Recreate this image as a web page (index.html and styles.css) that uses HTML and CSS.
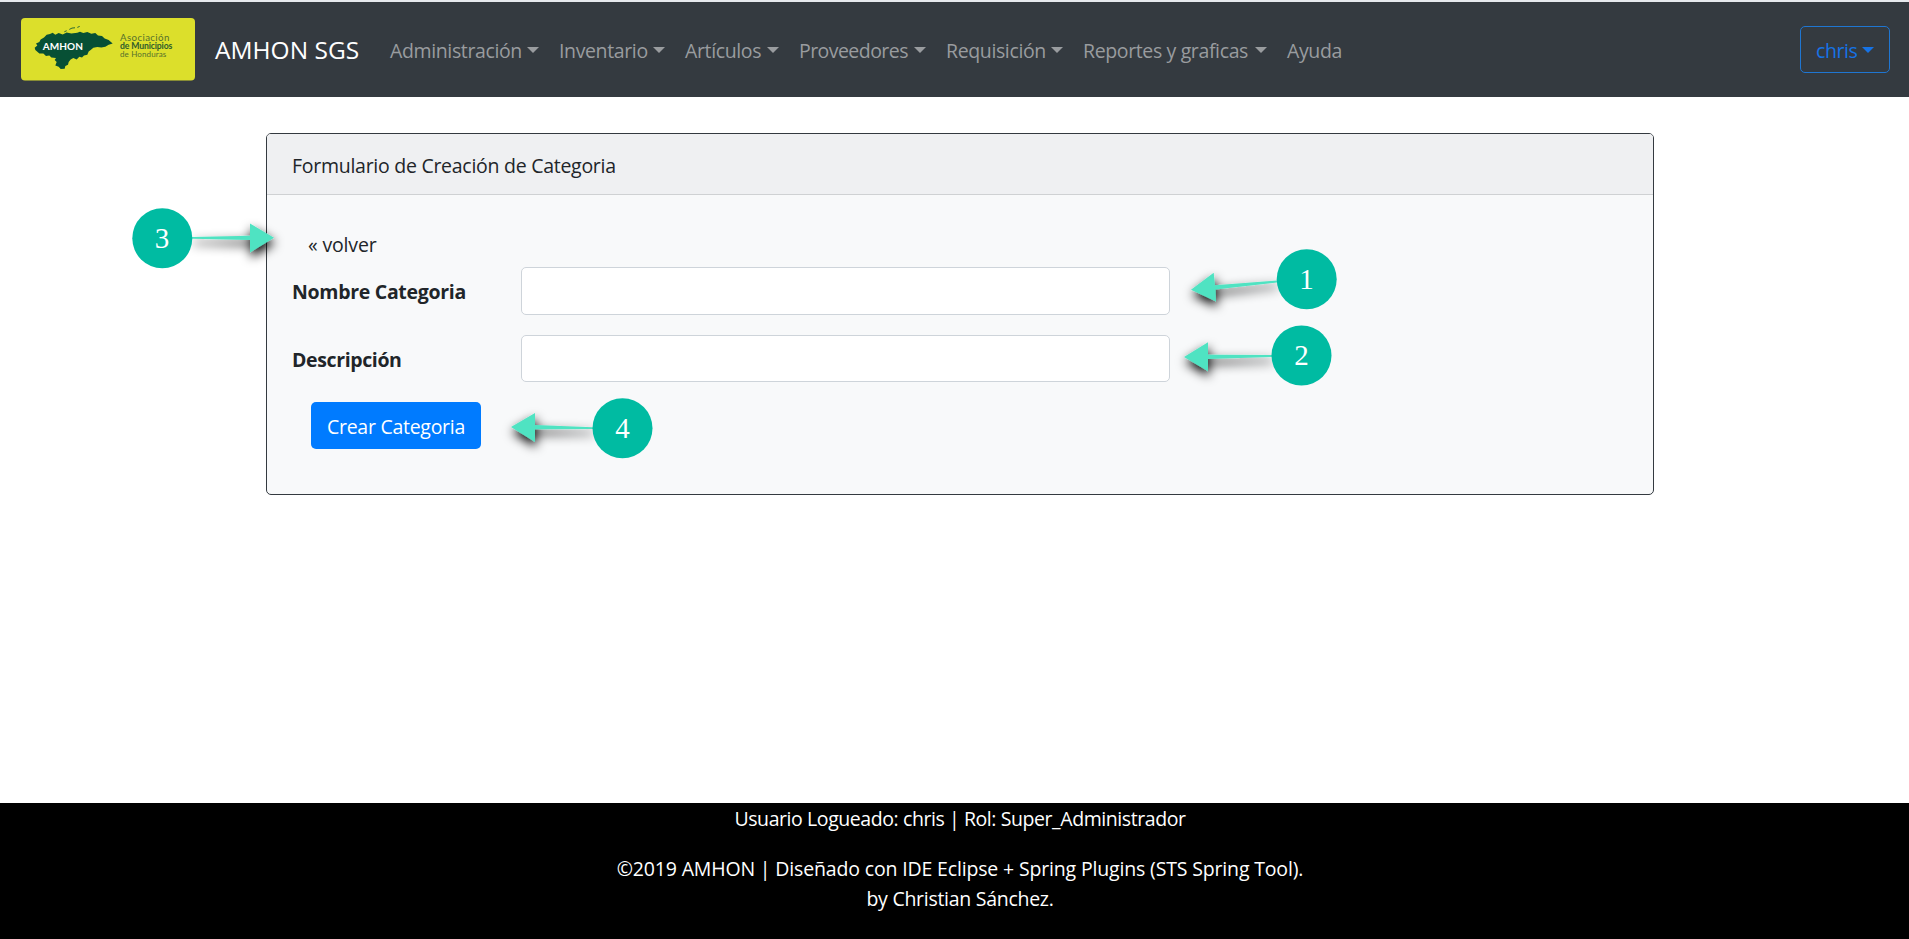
FILE: index.html
```html
<!DOCTYPE html>
<html lang="es">
<head>
<meta charset="utf-8">
<title>AMHON SGS</title>
<link rel="stylesheet" href="styles.css">
</head>
<body>
<header class="navbar">
  <svg class="logo" viewBox="63 54 522 187" role="img" aria-label="AMHON">
    <rect x="63" y="54" width="522" height="187" rx="12" fill="#dcdf2b"/>
    <path fill="#075035" d="M106 150L104 143L112 136L108 130L118 126L122 118L132 112L140 104L150 102L158 98L166 104L176 99L188 103L200 97L214 100L232 98L240 95L250 99L262 96L274 101L286 99L294 106L306 108L314 115L326 120L338 130L326 134L316 140L304 142L292 141L280 143L272 150L266 154L262 164L252 166L246 172L238 170L230 178L220 174L212 178L206 186L204 194L196 198L194 206L182 207L176 200L166 196L170 186L164 180L168 174L154 172L148 166L138 168L130 160L118 160Z"/>
    <path d="M193 95l7-3M208 88l8-4l9-1M232 82l7-3" stroke="#075035" stroke-width="2.5" fill="none"/>
    <text class="logo-name" x="128" y="149" textLength="121">AMHON</text>
    <text class="logo-text" x="360" y="122" textLength="148">Asociación</text>
    <text class="logo-text logo-strong" x="360" y="146" textLength="157">de Municipios</text>
    <text class="logo-text logo-small" x="360" y="170" textLength="139">de Honduras</text>
  </svg>
  <a class="brand">AMHON SGS</a>
  <nav class="menu">
    <a class="drop n1">Administración</a>
    <a class="drop n2">Inventario</a>
    <a class="drop n3">Artículos</a>
    <a class="drop n4">Proveedores</a>
    <a class="drop n5">Requisición</a>
    <a class="drop n6">Reportes y graficas</a>
    <a class="n7">Ayuda</a>
  </nav>
  <button class="user drop">chris</button>
</header>
<main>
  <section class="card">
    <h1 class="card-header"><span class="title">Formulario de Creación de Categoria</span></h1>
    <form class="card-body">
      <a class="back">« volver</a>
      <div class="row"><label for="n"><span class="l1">Nombre Categoria</span></label><input id="n"></div>
      <div class="row short"><label for="d"><span class="l2">Descripción</span></label><input id="d"></div>
      <button class="submit" type="button">Crear Categoria</button>
    </form>
  </section>
</main>
<footer>
  <p><span class="f1">Usuario Logueado: chris | Rol: Super_Administrador</span></p>
  <p><span class="f2">©2019 AMHON | Diseñado con IDE Eclipse + Spring Plugins (STS Spring Tool).</span><br><span class="f3">by Christian Sánchez.</span></p>
</footer>
<svg class="notes" viewBox="0 0 1909 939">
  <defs><filter id="shadow" x="-30%" y="-100%" width="160%" height="300%"><feDropShadow dx="1" dy="5" stdDeviation="5.5" flood-color="#000" flood-opacity="1"/></filter></defs>
  <g class="arrow">
    <path d="M274 237.7L250 252.5V240L192 238.8V237L250 235.7V223.5Z"/>
    <path d="M1191 289.7L1213.7 272.7L1215 285.2L1277 280.6V282.6L1215.5 289.6L1216 301.5Z"/>
    <path d="M1184 357L1208 342.3V354.7L1272 355V357L1208 359V371.3Z"/>
    <path d="M511 427L535 413V425L593 427.2V429L535 429.3V442Z"/>
  </g>
  <g class="dot">
    <circle cx="162.3" cy="238.3" r="30"/><circle cx="1306.7" cy="279.3" r="30"/><circle cx="1301.5" cy="355.5" r="30"/><circle cx="622.5" cy="428.3" r="30"/>
  </g>
  <g class="digit">
    <text x="162" y="247.5">3</text><text x="1306.5" y="289">1</text><text x="1301.5" y="365">2</text><text x="622.5" y="438">4</text>
  </g>
</svg>
</body>
</html>
```
FILE: styles.css
```css
* { box-sizing: border-box; }
body { margin: 0; min-height: 939px; position: relative; display: flex; flex-direction: column; overflow: hidden; background: #fff; color: #212529; font: 19.5px/30px "Open Sans", "Noto Sans", sans-serif; border-top: 2px solid #e6e9ed; }
.navbar { height: 95px; padding: 0 19px 0 21px; background: #343a40; display: flex; align-items: center; }
.logo { flex: none; width: 174px; height: 62.5px; }
.logo-name { font: 700 30px Lato, sans-serif; fill: #fff; }
.logo-text { font: 400 29px Lato, sans-serif; fill: #55702c; }
.logo-strong { font-size: 26px; font-weight: 700; fill: #2f5c2c; }
.logo-small { font-size: 24px; }
.brand { flex: none; margin-left: 20px; padding-top: 1px; width: 175px; color: #fff; font-size: 24.5px; white-space: nowrap; }
.menu { display: flex; gap: 20px; padding-top: 3px; color: #999c9f; white-space: nowrap; letter-spacing: -.37px; }
.drop { display: flex; align-items: center; }
.drop::after { content: ""; margin: -2px 0 0 auto; border: 6px solid transparent; border-top-color: currentColor; border-bottom: 0; }
.n1 { width: 149px; }
.n2 { width: 106px; }
.n3 { width: 94px; }
.n4 { width: 127px; letter-spacing: -.55px; }
.n5 { width: 117px; }
.n6 { width: 184px; }
.user { margin-left: auto; width: 90px; height: 47px; padding: 2px 15px 0; border: 1px solid #1f76d2; border-radius: 5px; background: transparent; color: #1673e6; font: inherit; letter-spacing: -.4px; }
main { flex: 1; padding: 36px 255px 0 266px; }
.card { height: 362px; border: 1px solid #343a40; border-radius: 5px; background: #f8f9fa; }
.card-header { margin: 0; height: 61px; padding: 17px 25px 12px; font-size: inherit; font-weight: 400; background: #eff0f2; border-bottom: 1px solid #cfd1d3; border-radius: 4px 4px 0 0; }
.title { letter-spacing: -.27px; }
.card-body { padding: 35px 25px; }
.back { display: block; margin: 0 0 7px 16px; letter-spacing: -.15px; }
.row { display: flex; align-items: center; height: 48px; margin-bottom: 20px; }
.short { height: 47px; }
.row label { width: 229px; padding-top: 2px; font-weight: 700; }
.l1 { letter-spacing: -.3px; }
.l2 { letter-spacing: -.38px; }
.row input { width: 649px; height: 100%; border: 1px solid #ced4da; border-radius: 5px; background: #fff; }
.submit { display: block; margin-left: 19px; width: 170px; height: 47px; padding: 2px 0 0; border: 0; border-radius: 5px; background: #007bff; color: #fff; font: inherit; letter-spacing: -.27px; }
footer { height: 136px; padding-left: 11px; background: #000; color: #fff; text-align: center; }
footer p { margin: 0 0 20px; padding-top: 1px; }
footer p + p { padding: 0; }
.f1 { letter-spacing: -.42px; }
.f2 { letter-spacing: -.16px; }
.f3 { letter-spacing: -.28px; }
.notes { position: absolute; left: 0; top: -2px; width: 1909px; height: 939px; pointer-events: none; }
.arrow { fill: #50e3c2; }
.arrow path { filter: url(#shadow); }
.dot { fill: #00bba2; }
.digit { fill: #fff; font: 29px "Liberation Serif", serif; text-anchor: middle; }
```
